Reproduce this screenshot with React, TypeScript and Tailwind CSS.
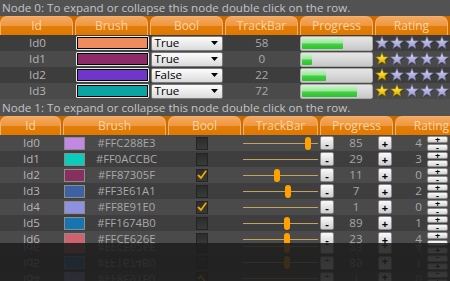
import React from "react";

const FONT = { fontFamily: '"Open Sans", "Noto Sans", sans-serif' };

const n0 = [
  { id: "Id0", color: "#EE8C5E", bool: "True", track: 58, prog: 60, rating: 0 },
  { id: "Id1", color: "#8C2A6A", bool: "True", track: 0, prog: 14, rating: 1 },
  { id: "Id2", color: "#6F36C9", bool: "False", track: 22, prog: 34, rating: 1 },
  { id: "Id3", color: "#0AA4A4", bool: "True", track: 72, prog: 79, rating: 2 },
];

const n1 = [
  { id: "Id0", hex: "#FFC288E3", color: "#C288E3", check: false, thumb: 65, prog: 85, rating: 4 },
  { id: "Id1", hex: "#FF0ACCBC", color: "#0ACCBC", check: false, thumb: null, prog: 29, rating: 3 },
  { id: "Id2", hex: "#FF87305F", color: "#87305F", check: true, thumb: 34, prog: 11, rating: 0 },
  { id: "Id3", hex: "#FF3E61A1", color: "#3E61A1", check: false, thumb: 45, prog: 7, rating: 2 },
  { id: "Id4", hex: "#FF8E91E0", color: "#8E91E0", check: true, thumb: null, prog: 1, rating: 0 },
  { id: "Id5", hex: "#FF1674B0", color: "#1674B0", check: false, thumb: 44, prog: 89, rating: 1 },
  { id: "Id6", hex: "#FFCE626E", color: "#CE626E", check: false, thumb: 44, prog: 23, rating: 4 },
  { id: "Id7", hex: "#FF4A9C3B", color: "#4A9C3B", check: false, thumb: 30, prog: 50, rating: 2 },
];

function Tab({ label, w }: { label: string; w: string }) {
  return (
    <div className={`${w} shrink-0 pr-[2px] h-full`}>
      <div className="h-full rounded-t-[7px] border border-b-0 border-[#f4b06e] bg-[linear-gradient(to_bottom,#f4a85e_0%,#ef983f_48%,#e27e0a_52%,#e07800_100%)] flex items-center justify-center text-[12px] text-[#ffd3a2] leading-none">
        {label}
      </div>
    </div>
  );
}

function Star({ on }: { on: boolean }) {
  return (
    <svg width="15" height="14" viewBox="0 0 15 14" className="shrink-0">
      <polygon
        points="8,1.6 9.6,5.6 14,5.8 10.6,8.6 11.8,13 8,10.6 4.2,13 5.4,8.6 2,5.8 6.4,5.6"
        fill="#1a1a1a"
        opacity="0.6"
      />
      <polygon
        points="7,0.4 8.7,4.7 13.4,4.9 9.8,7.9 11,12.5 7,9.9 3,12.5 4.2,7.9 0.6,4.9 5.3,4.7"
        fill={on ? "url(#starY)" : "url(#starG)"}
        stroke={on ? "#8a6a00" : "#6a6a9a"}
        strokeWidth="0.7"
        strokeLinejoin="round"
      />
    </svg>
  );
}

function Label({ text, h }: { text: string; h: string }) {
  return (
    <div className={`${h} flex items-center pl-[2px] text-[11.6px] text-[#c4c4c4] bg-[#525252] leading-none whitespace-nowrap`}>
      {text}
    </div>
  );
}

function Btn({ t }: { t: string }) {
  return (
    <div className="w-[14px] h-[14px] rounded-[2px] border border-[#8a8a8a] bg-[linear-gradient(to_bottom,#fafafa,#e4e4e4_50%,#cfcfcf)] flex items-center justify-center text-[11px] font-bold text-black leading-none shrink-0">
      {t}
    </div>
  );
}

function Content() {
  return (
    <div className="h-[243px] overflow-hidden bg-[#464646]" style={FONT}>
      <Label text="Node 0: To expand or collapse this node double click on the row." h="h-[16px]" />
      <div className="h-[19px] flex bg-[#cc6c00]">
        <Tab label="Id" w="w-[75px]" />
        <Tab label="Brush" w="w-[75px]" />
        <Tab label="Bool" w="w-[75px]" />
        <Tab label="TrackBar" w="w-[75px]" />
        <Tab label="Progress" w="w-[75px]" />
        <Tab label="Rating" w="w-[75px]" />
      </div>
      {n0.map((r, i) => (
        <div key={r.id} className={`h-[16px] flex items-center ${i % 2 === 0 ? "bg-[#3d3d3d]" : "bg-[#4a4a4a]"}`}>
          <div className="w-[75px] text-center text-[11.6px] text-[#b4b4b4] leading-none">{r.id}</div>
          <div className="w-[75px] pl-[1px] pr-[1px]">
            <div className="h-[14px] border border-[#e8e8e8] rounded-[1px]">
              <div className="h-full border border-black" style={{ backgroundColor: r.color }} />
            </div>
          </div>
          <div className="w-[75px] pl-[1px] pr-[1px]">
            <div className="h-[15px] rounded-[2px] border border-[#7a7a7a] bg-[linear-gradient(to_bottom,#fbfbfb,#ececec_50%,#dadada)] flex items-center justify-between pl-[3px] pr-[4px]">
              <span className="text-[11.6px] text-black leading-none">{r.bool}</span>
              <svg width="7" height="4" viewBox="0 0 7 4"><polygon points="0,0 7,0 3.5,4" fill="#000" /></svg>
            </div>
          </div>
          <div className="w-[75px] text-center text-[11.6px] text-[#a8a8a8] leading-none">{r.track}</div>
          <div className="w-[75px] pl-[1px] pr-[1px]">
            <div className="h-[15px] rounded-[2px] border border-[#a8a8a8] bg-[linear-gradient(to_bottom,#e6e6e6,#d8d8d8_50%,#c8c8c8)] overflow-hidden p-[1px]">
              <div
                className="h-full rounded-[1px] bg-[linear-gradient(to_bottom,#c8f3c8,#9ae89a_45%,#44d044_55%,#30c030)]"
                style={{ width: `${r.prog}%` }}
              />
            </div>
          </div>
          <div className="flex-1 flex items-center pl-[1px] gap-0">
            {[0, 1, 2, 3, 4].map((k) => (
              <Star key={k} on={k < r.rating} />
            ))}
          </div>
        </div>
      ))}
      <Label text="Node 1: To expand or collapse this node double click on the row." h="h-[17px]" />
      <div className="h-[19px] flex bg-[#cc6c00]">
        <Tab label="Id" w="w-[63px]" />
        <Tab label="Brush" w="w-[105px]" />
        <Tab label="Bool" w="w-[75px]" />
        <Tab label="TrackBar" w="w-[77px]" />
        <Tab label="Progress" w="w-[75px]" />
        <Tab label="Rating" w="w-[75px]" />
      </div>
      {n1.map((r, i) => (
        <div key={r.id} className={`h-[16px] flex items-center ${i % 2 === 0 ? "bg-[#4a4a4a]" : "bg-[#3e3e3e]"}`}>
          <div className="w-[63px] text-center text-[11.6px] text-[#b4b4b4] leading-none">{r.id}</div>
          <div className="w-[105px] flex items-center pl-[1px]">
            <div className="w-[21px] h-[13px] border border-[#8c8c8c]" style={{ backgroundColor: r.color }} />
            <div className="flex-1 text-center text-[11.3px] text-[#a8a8a8] leading-none">{r.hex}</div>
          </div>
          <div className="w-[75px] pl-[28px] flex items-center">
            <div className="w-[12px] h-[13px] border border-[#242424] bg-[linear-gradient(to_bottom,#2c2c2c,#3a3a3a)] flex items-center justify-center">
              {r.check && (
                <svg width="10" height="10" viewBox="0 0 10 10">
                  <path d="M1.5 5.5 L4 8 L8.8 1.2" stroke="#f0a400" strokeWidth="1.8" fill="none" strokeLinecap="round" strokeLinejoin="round" />
                </svg>
              )}
            </div>
          </div>
          <div className="w-[77px] h-full flex items-center relative">
            <div className="w-[75px] h-[1px] bg-[#c9a15a]" />
            {r.thumb !== null && (
              <div
                className="absolute top-[2px] w-[6px] h-[13px] rounded-full bg-[#ffa200]"
                style={{ left: `${r.thumb - 3}px` }}
              />
            )}
          </div>
          <div className="w-[75px] flex items-center">
            <Btn t="-" />
            <div className="flex-1 text-center text-[11.6px] text-[#a8a8a8] leading-none">{r.prog}</div>
            <Btn t="+" />
            <div className="w-[3px]" />
          </div>
          <div className="flex-1 flex items-center">
            <div className="w-[27px] text-right text-[11.6px] text-[#a8a8a8] leading-none">{r.rating}</div>
            <div className="ml-[5px] w-[21px] flex flex-col gap-[1px]">
              <div className="h-[7px] rounded-[2px] border border-[#8a8a8a] bg-[linear-gradient(to_bottom,#fafafa,#d4d4d4)] flex items-center justify-center text-[9px] font-bold leading-none text-black">+</div>
              <div className="h-[7px] rounded-[2px] border border-[#8a8a8a] bg-[linear-gradient(to_bottom,#fafafa,#d4d4d4)] flex items-center justify-center text-[9px] font-bold leading-none text-black">-</div>
            </div>
          </div>
        </div>
      ))}
    </div>
  );
}

export default function App() {
  return (
    <div className="w-[450px] h-[281px] overflow-hidden bg-[#1e1e1e]">
      <svg width="0" height="0" className="absolute">
        <defs>
          <linearGradient id="starY" x1="0" y1="0" x2="0" y2="1">
            <stop offset="0" stopColor="#fff3a0" />
            <stop offset="0.5" stopColor="#f6d420" />
            <stop offset="1" stopColor="#d8a800" />
          </linearGradient>
          <linearGradient id="starG" x1="0" y1="0" x2="0" y2="1">
            <stop offset="0" stopColor="#e8e8f8" />
            <stop offset="0.5" stopColor="#b8b8de" />
            <stop offset="1" stopColor="#9a9ac8" />
          </linearGradient>
        </defs>
      </svg>
      <Content />
      <div className="h-[38px] overflow-hidden bg-[#1e1e1e]" aria-hidden="true">
        <div className="h-[243px] -scale-y-100 opacity-[0.12]">
          <Content />
        </div>
      </div>
    </div>
  );
}
